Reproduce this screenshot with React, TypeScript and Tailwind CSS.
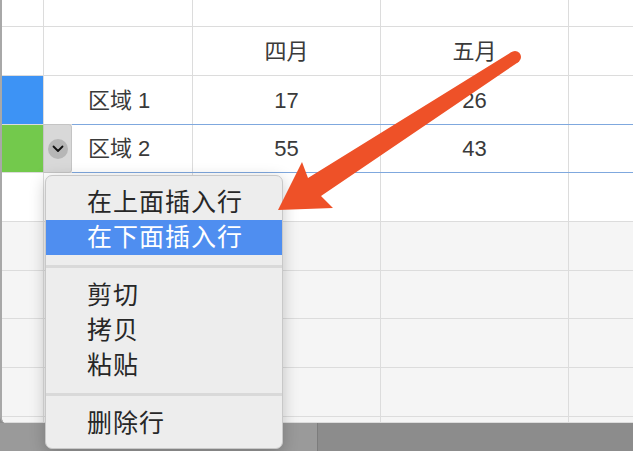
import React from "react";

const FONT = { fontFamily: '"Liberation Sans", "Noto Sans CJK SC", sans-serif' };

type Row = {
  h: string;
  swatch?: string;
  label?: string;
  a?: string;
  b?: string;
  shaded?: boolean;
};

const rows: Row[] = [
  { h: "h-[27px]" },
  { h: "h-[49px]", a: "四月", b: "五月" },
  { h: "h-[49px]", swatch: "bg-[#3d93f5]", label: "区域 1", a: "17", b: "26" },
  { h: "h-[48px]", swatch: "bg-[#73c94c]", label: "区域 2", a: "55", b: "43" },
  { h: "h-[49px]" },
  { h: "h-[49px]", shaded: true },
  { h: "h-[48px]", shaded: true },
  { h: "h-[49px]", shaded: true },
  { h: "h-[49px]", shaded: true },
  { h: "flex-1", shaded: true },
];

function SheetRow({ row }: { row: Row }) {
  return (
    <div
      className={`flex shrink-0 border-b border-[#dcdcdc] text-[22px] text-[#3a3a3a] ${row.h} ${
        row.shaded ? "bg-[#f5f5f5]" : "bg-white"
      }`}
    >
      <div className={`w-[42px] shrink-0 border-r border-[#dcdcdc] ${row.swatch ?? ""}`} />
      <div className="flex w-[149px] shrink-0 items-center border-r border-[#dcdcdc] pl-[44px]">
        {row.label}
      </div>
      <div className="flex w-[188px] shrink-0 items-center justify-center border-r border-[#dcdcdc]">
        {row.a}
      </div>
      <div className="flex w-[188px] shrink-0 items-center justify-center border-r border-[#dcdcdc]">
        {row.b}
      </div>
      <div className="flex-1" />
    </div>
  );
}

function MenuItem({ text, active }: { text: string; active?: boolean }) {
  return (
    <div
      className={`flex h-[35px] items-center pl-[41px] text-[25px] tracking-[1px] ${
        active ? "bg-[#4f8ef0] text-white" : "text-[#272727]"
      }`}
    >
      {text}
    </div>
  );
}

function Separator() {
  return (
    <div className="flex h-[24px] items-center">
      <div className="h-[3px] w-full bg-[#d9d9d9]" />
    </div>
  );
}

export default function App() {
  return (
    <div className="relative flex h-[451px] w-[633px] flex-col overflow-hidden bg-[#8e8e8e]" style={FONT}>
      <div className="flex h-[423px] shrink-0 flex-col overflow-hidden rounded-bl-[6px] border-l-2 border-[#a8a8a8] bg-white">
        {rows.map((row, i) => (
          <SheetRow key={i} row={row} />
        ))}
      </div>

      <div className="flex flex-1">
        <div className="w-[318px] border-r border-[#7c7c7c] bg-[#9a9a9a]" />
        <div className="flex-1 bg-[#8c8c8c]" />
      </div>

      {/* selected row outline + row handle */}
      <div className="absolute left-[72px] right-0 top-[124px] h-[49px] border-y border-[#7fa8de]" />
      <div className="absolute left-[43px] top-[124px] flex h-[49px] w-[29px] items-center justify-center rounded-r-[3px] border border-[#c4c4c4] bg-[#d8d8d8]">
        <div className="flex h-[20px] w-[20px] items-center justify-center rounded-full bg-[#b6b6b6]">
          <svg width="12" height="8" viewBox="0 0 12 8" fill="none">
            <path d="M1.5 1.5 6 6l4.5-4.5" stroke="#111" strokeWidth="1.8" strokeLinecap="round" strokeLinejoin="round" />
          </svg>
        </div>
      </div>

      {/* context menu */}
      <div className="absolute left-[45px] top-[175px] flex h-[274px] w-[238px] flex-col overflow-hidden rounded-[7px] border border-[#c8c8c8] bg-[#ededed] pb-[7px] pt-[9px] shadow-[0_4px_16px_rgba(0,0,0,0.22)]">
        <MenuItem text="在上面插入行" />
        <MenuItem text="在下面插入行" active />
        <Separator />
        <MenuItem text="剪切" />
        <MenuItem text="拷贝" />
        <MenuItem text="粘贴" />
        <Separator />
        <MenuItem text="删除行" />
      </div>

      {/* annotation arrow */}
      <svg className="pointer-events-none absolute left-0 top-0" width="633" height="451" viewBox="0 0 633 451">
        <polygon
          points="278,210 302,162 308,178 511.5,52 518.5,62 321,196 333,208"
          fill="#ee5128"
          strokeLinejoin="round"
        />
        <circle cx="515" cy="57" r="6" fill="#ee5128" />
      </svg>
    </div>
  );
}
